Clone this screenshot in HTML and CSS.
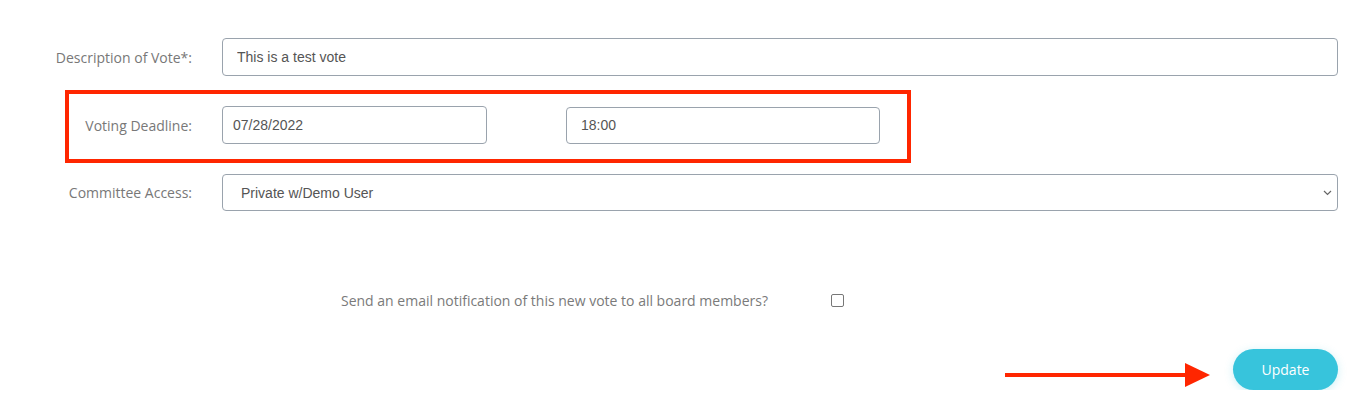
FILE: index.html
```html
<!DOCTYPE html>
<html lang="en">

<head>
    <meta charset="UTF-8">
    <meta name="viewport" content="width=device-width, initial-scale=1.0">
    <title>Edit Vote</title>
    <link rel="stylesheet" href="styles.css">
</head>

<body>

    <form class="vote-form">
        <div class="form-row">
            <label class="form-label" for="description">Description of Vote*:</label>
            <input class="form-input" type="text" id="description" value="This is a test vote">
        </div>

        <div class="form-row deadline-row">
            <label class="form-label" for="deadlineDate">Voting Deadline:</label>
            <input class="form-input date-input" type="text" id="deadlineDate" value="07/28/2022">
            <input class="form-input time-input" type="text" id="deadlineTime" value="18:00">
            <div class="highlight-box"></div>
        </div>

        <div class="form-row">
            <label class="form-label" for="committee">Committee Access:</label>
            <div class="select-wrap">
                <select class="form-input form-select" id="committee">
                    <option>Private w/Demo User</option>
                </select>
                <svg class="select-caret" width="9" height="6" viewBox="0 0 9 6">
                    <path d="M1 1 L4.5 4.5 L8 1" fill="none" stroke="#666" stroke-width="1.2"/>
                </svg>
            </div>
        </div>

        <div class="notify-row">
            <span class="notify-text">Send an email notification of this new vote to all board members?</span>
            <span class="notify-check"></span>
        </div>

        <div class="actions-row">
            <div class="arrow">
                <div class="arrow-line"></div>
                <div class="arrow-head"></div>
            </div>
            <button type="button" class="update-btn">Update</button>
        </div>
    </form>

</body>

</html>
```

FILE: styles.css
```css
body {
    font-family: 'Open Sans', 'Liberation Sans', sans-serif;
    background-color: #fff;
    margin: 0;
    padding: 0;
}

.vote-form {
    padding: 38px 24px 0 0;
}

.form-row {
    display: flex;
    align-items: center;
    margin-bottom: 30px;
    position: relative;
}

.form-label {
    width: 192px;
    flex-shrink: 0;
    margin-right: 30px;
    text-align: right;
    font-size: 14px;
    color: #787878;
}

.form-input {
    flex: 1;
    height: 38px;
    box-sizing: border-box;
    border: 1px solid #9aa3ad;
    border-radius: 4px;
    padding: 0 14px;
    font-family: 'Liberation Sans', Arial, sans-serif;
    font-size: 14px;
    color: #555;
    background-color: #fff;
}

.date-input {
    flex: none;
    width: 265px;
    padding-left: 10px;
}

.time-input {
    flex: none;
    width: 314px;
    margin-left: 79px;
    height: 37px;
}

.highlight-box {
    position: absolute;
    left: 65px;
    top: -16px;
    width: 846px;
    height: 73px;
    box-sizing: border-box;
    border: 4px solid #ff2600;
    pointer-events: none;
}

.select-wrap {
    flex: 1;
    position: relative;
    display: flex;
}

.form-select {
    -webkit-appearance: none;
    appearance: none;
    height: 37px;
    padding-left: 18px;
}

.select-caret {
    position: absolute;
    right: 6px;
    top: 16px;
}

.notify-row {
    display: flex;
    align-items: center;
    margin-top: 80px;
    padding-left: 341px;
}

.notify-text {
    font-size: 14px;
    color: #7a7a7a;
    width: 490px;
}

.notify-check {
    width: 11px;
    height: 11px;
    border: 1.5px solid #777;
    border-radius: 2px;
}

.actions-row {
    display: flex;
    justify-content: flex-end;
    align-items: center;
    margin-top: 39px;
}

.arrow {
    display: flex;
    align-items: center;
    margin-right: 23px;
    margin-top: 11px;
}

.arrow-line {
    width: 180px;
    height: 4px;
    background-color: #ff2600;
}

.arrow-head {
    width: 0;
    height: 0;
    border-top: 12px solid transparent;
    border-bottom: 12px solid transparent;
    border-left: 25px solid #ff2600;
}

.update-btn {
    width: 105px;
    height: 41px;
    border: none;
    border-radius: 21px;
    background-color: #37c4dc;
    color: #fff;
    font-family: 'Open Sans', sans-serif;
    font-size: 14px;
    box-shadow: 0 2px 8px rgba(55, 196, 220, 0.25);
    cursor: pointer;
}
```
